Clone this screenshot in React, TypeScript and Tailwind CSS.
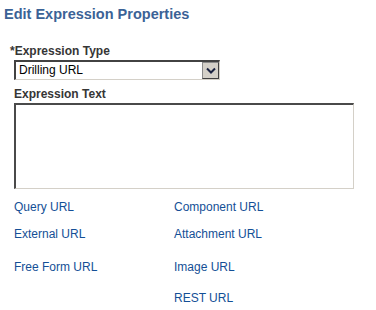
import React from 'react';

const links: [string, string][] = [
    ['Query URL', 'Component URL'],
    ['External URL', 'Attachment URL'],
    ['Free Form URL', 'Image URL'],
    ['', 'REST URL'],
];

const rowGaps = ['mt-[11px]', 'mt-[13px]', 'mt-[19px]', 'mt-[17px]'];

export default function App() {
    return (
        <div className="w-[376px] h-[310px] bg-white font-['Liberation_Sans',Arial,sans-serif] overflow-hidden">
            <h1 className="pl-[4px] pt-[5px] text-[14.5px] leading-[18px] font-bold text-[#3b6296]">
                Edit Expression Properties
            </h1>

            <div className="mt-[21px] pl-[10px] text-[12px] leading-[14px] font-bold text-[#363636]">
                *Expression Type
            </div>

            <div className="ml-[14px] mt-[2px] w-[206px] h-[20px] flex border-t-2 border-l-2 border-t-[#424242] border-l-[#424242] border-r border-b border-r-[#d4d0c8] border-b-[#d4d0c8] bg-white">
                <div className="flex-1 pl-[3px] text-[12px] leading-[17px] text-black">Drilling URL</div>
                <div className="w-[17px] h-[17px] bg-[#d4d0c8] border border-t-[#8a8a8a] border-l-[#8a8a8a] border-r-[#404040] border-b-[#404040] flex items-center justify-center">
                    <svg width="10" height="7" viewBox="0 0 10 7">
                        <path d="M1 1.5 L5 5.5 L9 1.5" fill="none" stroke="#1a2240" strokeWidth="2" />
                    </svg>
                </div>
            </div>

            <div className="mt-[7px] pl-[14px] text-[12px] leading-[14px] font-bold text-[#363636]">
                Expression Text
            </div>

            <div className="ml-[14px] mt-[2px] w-[340px] h-[86px] bg-white border-t-2 border-l-2 border-t-[#4a4a4a] border-l-[#4a4a4a] border-r border-b border-r-[#d4d0c8] border-b-[#d4d0c8]" />

            <div className="pl-[14px]">
                {links.map((row, i) => (
                    <div key={i} className={`flex text-[12px] leading-[14px] text-[#144f96] ${rowGaps[i]}`}>
                        <span className="w-[160px] cursor-pointer">{row[0]}</span>
                        <span className="cursor-pointer">{row[1]}</span>
                    </div>
                ))}
            </div>
        </div>
    );
}
